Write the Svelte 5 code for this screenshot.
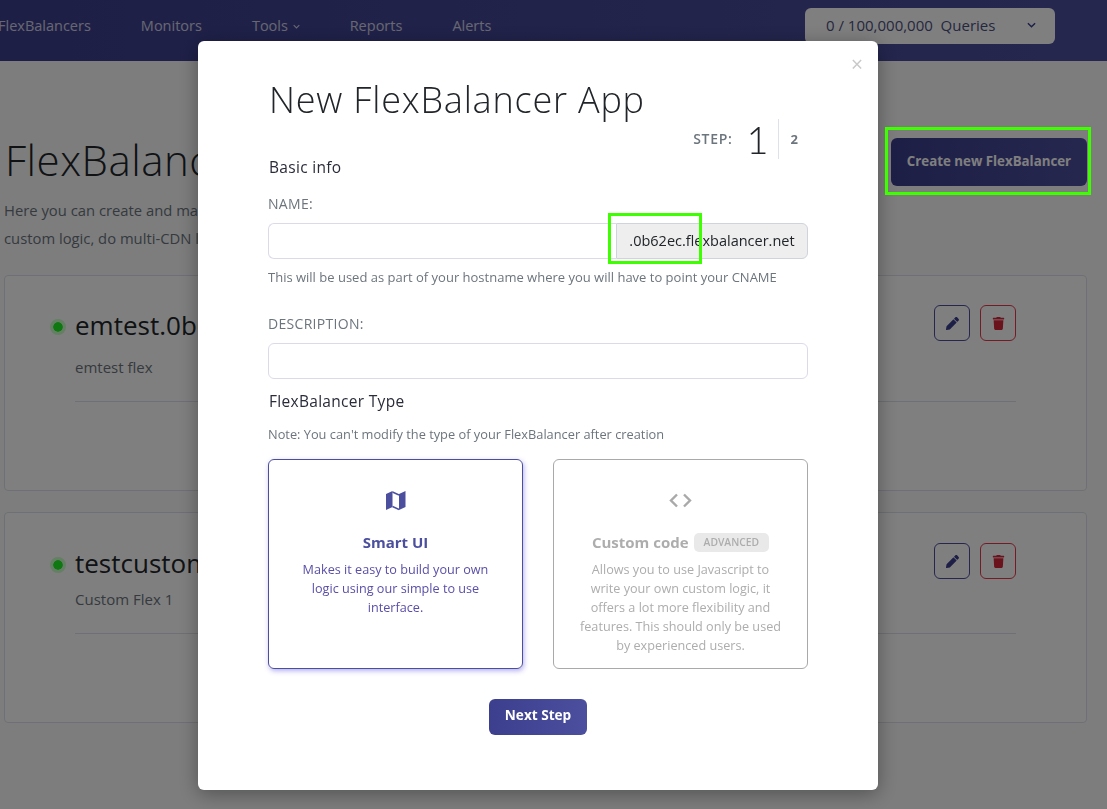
<script>
  const navLinks = [
    { label: 'FlexBalancers' },
    { label: 'Monitors' },
    { label: 'Tools', caret: true },
    { label: 'Reports' },
    { label: 'Alerts' }
  ];

  const apps = [
    { name: 'emtest.0b62ec.flexbalancer.net', description: 'emtest flex' },
    { name: 'testcustom.0b62ec.flexbalancer.net', description: 'Custom Flex 1' }
  ];
</script>

<div class="page">
  <header class="navbar">
    <nav class="links">
      {#each navLinks as link}
        <a href="#top">
          {link.label}
          {#if link.caret}
            <svg class="caret" viewBox="0 0 10 6"><path d="M1 1l4 4 4-4" /></svg>
          {/if}
        </a>
      {/each}
    </nav>
    <div class="queries">
      <span>0 / 100,000,000&nbsp; Queries</span>
      <svg class="caret dark" viewBox="0 0 10 6"><path d="M1 1l4 4 4-4" /></svg>
    </div>
  </header>

  <main class="content">
    <div class="intro">
      <div>
        <h1>FlexBalancers</h1>
        <p>Here you can create and manage your FlexBalancers, build your own<br />custom logic, do multi-CDN load balancing</p>
      </div>
      <button class="create">Create new FlexBalancer</button>
    </div>

    {#each apps as app}
      <section class="app">
        <div class="appTop">
          <div class="appName">
            <span class="dot"></span>
            <h2>{app.name}</h2>
          </div>
          <div class="actions">
            <button class="iconBtn edit" aria-label="edit">
              <svg viewBox="0 0 512 512"><path d="M497.9 142.1l-46.1 46.1c-4.7 4.7-12.3 4.7-17 0l-111-111c-4.7-4.7-4.7-12.3 0-17l46.1-46.1c18.7-18.7 49.1-18.7 67.9 0l60.1 60.1c18.8 18.7 18.8 49.1 0 67.9zM284.2 99.8L21.6 362.4.4 483.9c-2.9 16.4 11.4 30.6 27.8 27.8l121.5-21.3 262.6-262.6c4.7-4.7 4.7-12.3 0-17l-111-111c-4.8-4.7-12.4-4.7-17.1 0z" /></svg>
            </button>
            <button class="iconBtn remove" aria-label="delete">
              <svg viewBox="0 0 448 512"><path d="M432 32H312l-9.4-18.7A24 24 0 0 0 281.1 0H166.8a23.72 23.72 0 0 0-21.4 13.3L136 32H16A16 16 0 0 0 0 48v32a16 16 0 0 0 16 16h416a16 16 0 0 0 16-16V48a16 16 0 0 0-16-16zM53.2 467a48 48 0 0 0 47.9 45h245.8a48 48 0 0 0 47.9-45L416 128H32z" /></svg>
            </button>
          </div>
        </div>
        <p class="appDesc">{app.description}</p>
        <div class="appRule"></div>
      </section>
    {/each}
  </main>
</div>

<div class="backdrop"></div>

<div class="modal">
  <span class="close">×</span>
  <h3>New FlexBalancer App</h3>

  <div class="stepRow">
    <span class="sectionTitle">Basic info</span>
    <div class="steps">
      <span class="stepLabel">STEP:</span>
      <span class="stepNow">1</span>
      <span class="stepNext">2</span>
    </div>
  </div>

  <label class="fieldLabel" for="name">NAME:</label>
  <div class="inputGroup">
    <input id="name" />
    <span class="addon">.0b62ec.flexbalancer.net</span>
  </div>
  <p class="hint">This will be used as part of your hostname where you will have to point your CNAME</p>

  <label class="fieldLabel desc" for="description">DESCRIPTION:</label>
  <input id="description" class="full" />

  <div class="sectionTitle typeTitle">FlexBalancer Type</div>
  <p class="hint note">Note: You can't modify the type of your FlexBalancer after creation</p>

  <div class="types">
    <div class="type selected">
      <svg class="typeIcon" viewBox="0 0 23 21">
        <path d="M2 3l6.5-3v16L2 19zM15 3l6.5-3v16L15 19z" />
        <path class="fold" d="M8.5 1l6.5 3M8.5 15.5l6.5 3" />
      </svg>
      <div class="typeTitleRow"><strong>Smart UI</strong></div>
      <p>Makes it easy to build your own logic using our simple to use interface.</p>
    </div>
    <div class="type">
      <svg class="typeIcon code" viewBox="0 0 23 21"><path d="M8 3.5l-6 6 6 6M15 3.5l6 6-6 6" /></svg>
      <div class="typeTitleRow"><strong>Custom code</strong><span class="badge">ADVANCED</span></div>
      <p>Allows you to use Javascript to write your own custom logic, it offers a lot more flexibility and features. This should only be used by experienced users.</p>
    </div>
  </div>

  <button class="next">Next Step</button>
</div>

<div class="marker markerCreate"></div>
<div class="marker markerHost"></div>

<style>
  :global(body) {
    margin: 0;
    overflow: hidden;
    font-family: "Open Sans", sans-serif;
    color: #212529;
  }

  .page {
    width: 1107px;
    height: 809px;
    background: #fafbfd;
    overflow: hidden;
  }

  .navbar {
    height: 61px;
    box-sizing: border-box;
    display: flex;
    justify-content: space-between;
    padding: 8px 52px 0 0;
    background: linear-gradient(90deg, #3c3e8e, #4b4f9e);
  }

  .links {
    display: flex;
    height: 34px;
    align-items: center;
    gap: 50px;
    margin-left: -2px;
  }

  .links a {
    font-size: 14.5px;
    color: #fff;
    opacity: 0.75;
    text-decoration: none;
  }

  .caret {
    width: 7px;
    height: 5px;
    margin-left: 1px;
    vertical-align: 2px;
    fill: none;
    stroke: #fff;
    stroke-width: 1.6;
  }

  .caret.dark {
    width: 9px;
    height: 6px;
    stroke: #3c3e8e;
  }

  .queries {
    width: 250px;
    height: 36px;
    box-sizing: border-box;
    padding: 0 19px 2px 21px;
    display: flex;
    align-items: center;
    justify-content: space-between;
    border-radius: 6px;
    background: #fff;
    font-size: 15px;
    color: #4b4f7e;
  }

  .content {
    padding: 0 20px 0 4px;
  }

  .intro {
    display: flex;
    justify-content: space-between;
    height: 214px;
    box-sizing: border-box;
    padding-top: 77px;
  }

  h1 {
    margin: 0 0 14px 1px;
    font-size: 42px;
    line-height: 44px;
    font-weight: 300;
    letter-spacing: 0.5px;
  }

  .intro p {
    margin: 0;
    font-size: 14.8px;
    line-height: 28px;
    color: #6c757d;
  }

  .create {
    width: 196px;
    height: 48px;
    padding: 0 0 2px;
    border: 0;
    border-radius: 6px;
    background: linear-gradient(90deg, #3c3e8e, #4b4f9e);
    color: #fff;
    font: 700 13.3px "Open Sans", sans-serif;
  }

  .app {
    height: 216px;
    box-sizing: border-box;
    margin-bottom: 22px;
    padding: 29px 70px 0 45px;
    border: 1px solid #dfe1ea;
    border-radius: 4px;
    background: #fff;
  }

  .app + .app {
    height: 211px;
    margin-top: -1px;
    padding-top: 30px;
  }

  .appTop {
    display: flex;
    justify-content: space-between;
  }

  .appName {
    display: flex;
    align-items: center;
    height: 42px;
    margin-top: -1px;
  }

  .dot {
    box-sizing: border-box;
    width: 16px;
    height: 16px;
    margin: 4px 9px 0 0;
    border: 3.5px solid #c8ffc8;
    border-radius: 50%;
    background: #20f020;
    background-clip: padding-box;
  }

  h2 {
    margin: 0;
    font-size: 26px;
    font-weight: 400;
    white-space: nowrap;
  }

  .actions {
    display: flex;
    gap: 10px;
  }

  .iconBtn {
    width: 36px;
    height: 36px;
    padding: 0;
    display: flex;
    align-items: center;
    justify-content: center;
    border-radius: 6px;
    background: none;
  }

  .iconBtn svg {
    width: 13px;
    height: 13px;
  }

  .edit {
    border: 1px solid #4b4f9e;
    fill: #3c3e8e;
  }

  .remove {
    border: 1px solid #e8394a;
    fill: #d62638;
  }

  .appDesc {
    margin: 10px 0 0 25px;
    font-size: 15px;
    line-height: 22px;
    color: #6c757d;
  }

  .app + .app .appDesc {
    margin-top: 4px;
  }

  .appRule {
    margin: 23px 0 0 25px;
    height: 1px;
    background: #dfe1ea;
  }

  .backdrop {
    position: fixed;
    inset: 0;
    background: rgba(0, 0, 0, 0.5);
  }

  .modal {
    position: fixed;
    left: 198px;
    top: 41px;
    width: 680px;
    height: 749px;
    box-sizing: border-box;
    padding: 36px 70px 0;
    border-radius: 6px;
    background: #fff;
    box-shadow: 0 4px 20px rgba(0, 0, 0, 0.35);
  }

  .close {
    position: absolute;
    top: 11px;
    right: 15px;
    font-size: 21px;
    line-height: 24px;
    color: #c9c9c9;
  }

  h3 {
    margin: 0 0 0 1px;
    font-size: 36px;
    line-height: 46px;
    font-weight: 300;
    letter-spacing: 0.8px;
    color: #212529;
  }

  .stepRow {
    display: flex;
    justify-content: space-between;
    align-items: flex-end;
    margin-top: -4px;
  }

  .sectionTitle {
    margin-left: 1px;
    font-size: 15.5px;
    line-height: 20px;
    letter-spacing: 0.3px;
    color: #2a2c3a;
  }

  .steps {
    display: flex;
    align-items: center;
    height: 40px;
    margin-bottom: 18px;
    padding-right: 10px;
  }

  .stepLabel {
    padding-bottom: 2px;
    font-size: 14px;
    font-weight: 600;
    letter-spacing: 0.7px;
    color: #6c757d;
  }

  .stepNow {
    margin-left: 14px;
    padding-right: 9px;
    font-family: Lato, sans-serif;
    font-size: 38px;
    font-weight: 300;
    line-height: 40px;
    border-right: 1px solid #dee2e6;
  }

  .stepNext {
    margin-left: 12px;
    font-size: 13px;
    font-weight: 700;
    color: #6c757d;
  }

  .fieldLabel {
    display: block;
    margin: 17px 0 0;
    font-size: 14px;
    font-weight: 500;
    line-height: 20px;
    letter-spacing: 0.3px;
    color: #6c757d;
  }

  .fieldLabel.desc {
    margin-top: 28px;
  }

  .inputGroup {
    display: flex;
    margin-top: 9px;
  }

  input {
    flex: 1;
    height: 36px;
    min-width: 0;
    box-sizing: border-box;
    padding: 0 12px;
    border: 1px solid #dcdaea;
    border-right: 0;
    border-radius: 6px 0 0 6px;
    background: #fff;
  }

  input.full {
    display: block;
    width: 100%;
    margin-top: 9px;
    border-right: 1px solid #dcdaea;
    border-radius: 6px;
  }

  .addon {
    width: 192px;
    height: 36px;
    box-sizing: border-box;
    border: 1px solid #ced4da;
    border-radius: 0 6px 6px 0;
    background: #eee;
    font-size: 14.5px;
    line-height: 34px;
    text-align: center;
    color: #212529;
    white-space: nowrap;
  }

  .hint {
    margin: 9px 0 0;
    font-size: 13px;
    line-height: 18px;
    color: #6c757d;
  }

  .typeTitle {
    display: block;
    margin-top: 12px;
  }

  .hint.note {
    margin-top: 14px;
    font-size: 12.8px;
  }

  .types {
    display: flex;
    justify-content: space-between;
    margin-top: 16px;
  }

  .type {
    width: 255px;
    height: 210px;
    box-sizing: border-box;
    padding: 31px 24px 0;
    border: 1px solid #a9a9a9;
    border-radius: 6px;
    text-align: center;
    color: #adadad;
  }

  .type.selected {
    border-color: #4b4f9e;
    color: #4b4f9e;
    box-shadow: 1px 2px 5px rgba(90, 80, 220, 0.45);
  }

  .typeIcon {
    display: block;
    width: 23px;
    height: 21px;
    margin: 0 auto;
    fill: #4b4f9e;
  }

  .fold {
    fill: none;
    stroke: #4b4f9e;
    stroke-width: 1.4;
  }

  .typeIcon.code {
    fill: none;
    stroke: #a9a9a9;
    stroke-width: 2.4;
  }

  .typeTitleRow {
    display: flex;
    align-items: center;
    justify-content: center;
    height: 20px;
    margin-top: 20px;
    font-size: 15px;
  }

  .badge {
    margin-left: 5px;
    padding: 0 10px;
    border-radius: 5px;
    background: #e9e9e9;
    font-size: 10.3px;
    font-weight: 600;
    line-height: 19px;
  }

  .type p {
    margin: 8px 0 0;
    font-size: 12.65px;
    line-height: 19px;
  }

  .type.selected p {
    color: #5a4fa8;
  }

  .next {
    display: block;
    width: 98px;
    height: 36px;
    margin: 30px auto 0;
    padding: 0 0 5px;
    border: 0;
    border-radius: 6px;
    background: linear-gradient(90deg, #3c3e8e, #4b4f9e);
    color: #fff;
    font: 700 13.6px "Open Sans", sans-serif;
  }

  .marker {
    position: fixed;
    box-sizing: border-box;
    border: 3px solid #3dff00;
  }

  .markerCreate {
    left: 885px;
    top: 127px;
    width: 206px;
    height: 68px;
  }

  .markerHost {
    left: 608px;
    top: 213px;
    width: 94px;
    height: 51px;
  }
</style>
